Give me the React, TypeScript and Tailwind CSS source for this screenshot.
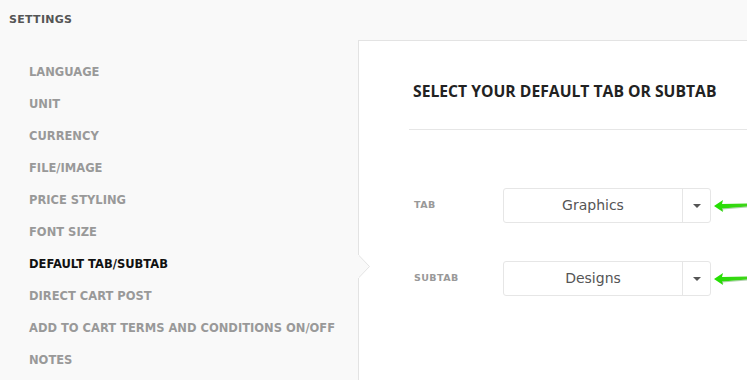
import React from "react";

const menu = [
  "LANGUAGE",
  "UNIT",
  "CURRENCY",
  "FILE/IMAGE",
  "PRICE STYLING",
  "FONT SIZE",
  "DEFAULT TAB/SUBTAB",
  "DIRECT CART POST",
  "ADD TO CART TERMS AND CONDITIONS ON/OFF",
  "NOTES",
];

const sans = "font-['DejaVu_Sans',sans-serif]";

function GreenArrow() {
  return (
    <svg width="36" height="14" viewBox="0 0 36 14" className="ml-[2px] shrink-0">
      <defs>
        <linearGradient id="g" x1="0" x2="1" y1="0" y2="0">
          <stop offset="0" stopColor="#22e000" />
          <stop offset="1" stopColor="#3fd41a" />
        </linearGradient>
      </defs>
      <path d="M1 7 L10 1 L9 5 L35 4.5 L35 7.5 L9 9.5 L10 13 Z" fill="url(#g)" />
      <path d="M10 12 L9 10 L34 8" stroke="#1a7a10" strokeOpacity="0.35" strokeWidth="1" fill="none" />
    </svg>
  );
}

function Select({ value }: { value: string }) {
  return (
    <div className="flex items-center">
      <div className="w-[208px] h-[35px] shrink-0 bg-white border border-[#e6e6e6] rounded-[3px] flex items-stretch">
        <div className={`flex-1 flex items-center justify-center text-[14px] text-[#555] ${sans}`}>{value}</div>
        <div className="w-[28px] border-l border-[#e6e6e6] flex items-center justify-center">
          <span className="w-0 h-0 border-l-[4px] border-r-[4px] border-t-[4px] border-l-transparent border-r-transparent border-t-[#555]" />
        </div>
      </div>
      <GreenArrow />
    </div>
  );
}

export default function App() {
  return (
    <div className="w-[747px] h-[380px] bg-[#f9f9f9] flex flex-col overflow-hidden">
      <div className={`h-[40px] pl-[9px] flex items-center text-[11px] font-bold text-[#555] tracking-[0.3px] ${sans}`}>
        SETTINGS
      </div>
      <div className="flex flex-1 min-w-0">
        <div className="w-[358px] shrink-0 pt-[17px]">
          {menu.map((m) => (
            <div
              key={m}
              className={`h-[32px] pl-[29px] flex items-center text-[11.5px] font-bold whitespace-nowrap ${sans} ${
                m === "DEFAULT TAB/SUBTAB" ? "text-[#111]" : "text-[#999]"
              }`}
            >
              {m}
            </div>
          ))}
        </div>
        <div className="flex-1 min-w-0 bg-white border-l border-t border-[#e3e3e3] relative">
          <svg width="13" height="32" viewBox="0 0 13 32" className="absolute left-[-1px] top-[214px]">
            <path d="M0.5 0 L11.5 11.5 L0.5 23 " fill="#f9f9f9" stroke="#e3e3e3" strokeWidth="1" />
            <rect x="0" y="0" width="1" height="23" fill="#f9f9f9" />
          </svg>
          <div className="ml-[50px] pt-[40px]">
            <div className="pl-[4px] h-[22px] flex items-center text-[15.7px] font-bold text-[#222] whitespace-nowrap font-['Open_Sans',sans-serif]">
              SELECT YOUR DEFAULT TAB OR SUBTAB
            </div>
            <div className="mt-[26px] border-t border-[#e6e6e6]" />
            <div className="mt-[58px] flex flex-col gap-[38px]">
              <div className="flex items-center">
                <div className={`w-[94px] shrink-0 pl-[5px] text-[9.5px] font-bold text-[#999] tracking-[0.4px] ${sans}`}>TAB</div>
                <Select value="Graphics" />
              </div>
              <div className="flex items-center">
                <div className={`w-[94px] shrink-0 pl-[5px] text-[9.5px] font-bold text-[#999] tracking-[0.4px] ${sans}`}>SUBTAB</div>
                <Select value="Designs" />
              </div>
            </div>
          </div>
        </div>
      </div>
    </div>
  );
}
